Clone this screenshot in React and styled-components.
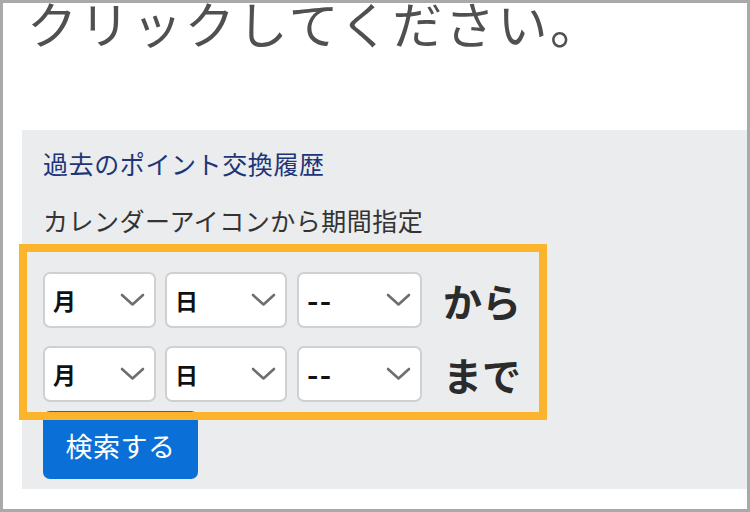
import React from "react";
import styled, { createGlobalStyle } from "styled-components";

const GlobalStyle = createGlobalStyle`
  body {
    margin: 0;
    background: #ffffff;
    font-family: "Noto Sans CJK JP", "Noto Sans", sans-serif;
  }
`;

const Frame = styled.div`
  width: 750px;
  height: 512px;
  box-sizing: border-box;
  border: 3px solid #a9a9a9;
  background: #ffffff;
  overflow: hidden;
`;

const Heading = styled.h1`
  margin: -6px 0 0 24px;
  font-size: 50px;
  line-height: 50px;
  letter-spacing: 2.6px;
  font-weight: 400;
  color: #505050;
  white-space: nowrap;
`;

const Panel = styled.section`
  margin: 83px 0 0 19px;
  padding: 15px 0 10px 21px;
  background: #ebecee;
`;

const Title = styled.h2`
  margin: 0;
  font-size: 25px;
  line-height: 36px;
  letter-spacing: 0.6px;
  font-weight: 400;
  color: #203577;
`;

const Note = styled.p`
  margin: 21px 0 0;
  font-size: 25px;
  line-height: 36px;
  letter-spacing: 0.5px;
  color: #333333;
`;

const DateBlock = styled.div`
  position: relative;
  margin-top: 34px;
  display: flex;
  flex-direction: column;
  gap: 18px;

  &::after {
    content: "";
    position: absolute;
    top: -28px;
    left: -24px;
    width: 528px;
    height: 176px;
    box-sizing: border-box;
    border: 8px solid #fbb42c;
    pointer-events: none;
  }
`;

const DateRow = styled.div`
  display: flex;
  align-items: center;
`;

const SelectBox = styled.div`
  width: ${(p) => p.$w}px;
  height: 56px;
  margin-right: ${(p) => p.$gap}px;
  box-sizing: border-box;
  display: flex;
  align-items: center;
  justify-content: space-between;
  padding: 0 9px 0 8px;
  background: #ffffff;
  border: 2px solid #d0d0d0;
  border-radius: 7px;
  font-size: 23px;
  font-weight: 700;
  color: #111111;
`;

const SelectText = styled.span`
  letter-spacing: ${(p) => (p.$dash ? "1px" : "0")};
  font-weight: ${(p) => (p.$dash ? 900 : 700)};
  transform: ${(p) => (p.$dash ? "scaleX(1.3)" : "none")};
  transform-origin: left center;
`;

const RangeLabel = styled.span`
  margin-left: 12px;
  font-size: 39px;
  line-height: 1;
  font-weight: 700;
  color: #2b2b2b;
`;

const SearchButton = styled.button`
  display: block;
  margin-top: 9px;
  width: 155px;
  height: 68px;
  border: none;
  border-radius: 7px;
  background: #0a6fd6;
  color: #ffffff;
  font-family: "Noto Sans CJK JP", "Noto Sans", sans-serif;
  font-size: 27px;
  letter-spacing: 0.5px;
  font-weight: 400;
  padding: 0;
`;

const Chevron = () => (
  <svg width="25" height="14" viewBox="0 0 25 14">
    <polyline
      points="2,2 12.5,11.5 23,2"
      fill="none"
      stroke="#6e6e6e"
      strokeWidth="2.6"
      strokeLinecap="round"
      strokeLinejoin="round"
    />
  </svg>
);

const Select = ({ label, w, gap }) => (
  <SelectBox $w={w} $gap={gap}>
    <SelectText $dash={label === "--"}>{label}</SelectText>
    <Chevron />
  </SelectBox>
);

const rows = ["から", "まで"];

export default function App() {
  return (
    <Frame>
      <GlobalStyle />
      <Heading>クリックしてください。</Heading>
      <Panel>
        <Title>過去のポイント交換履歴</Title>
        <Note>カレンダーアイコンから期間指定</Note>
        <DateBlock>
          {rows.map((r) => (
            <DateRow key={r}>
              <Select label="月" w={113} gap={9} />
              <Select label="日" w={122} gap={10} />
              <Select label="--" w={125} gap={9} />
              <RangeLabel>{r}</RangeLabel>
            </DateRow>
          ))}
        </DateBlock>
        <SearchButton>検索する</SearchButton>
      </Panel>
    </Frame>
  );
}
